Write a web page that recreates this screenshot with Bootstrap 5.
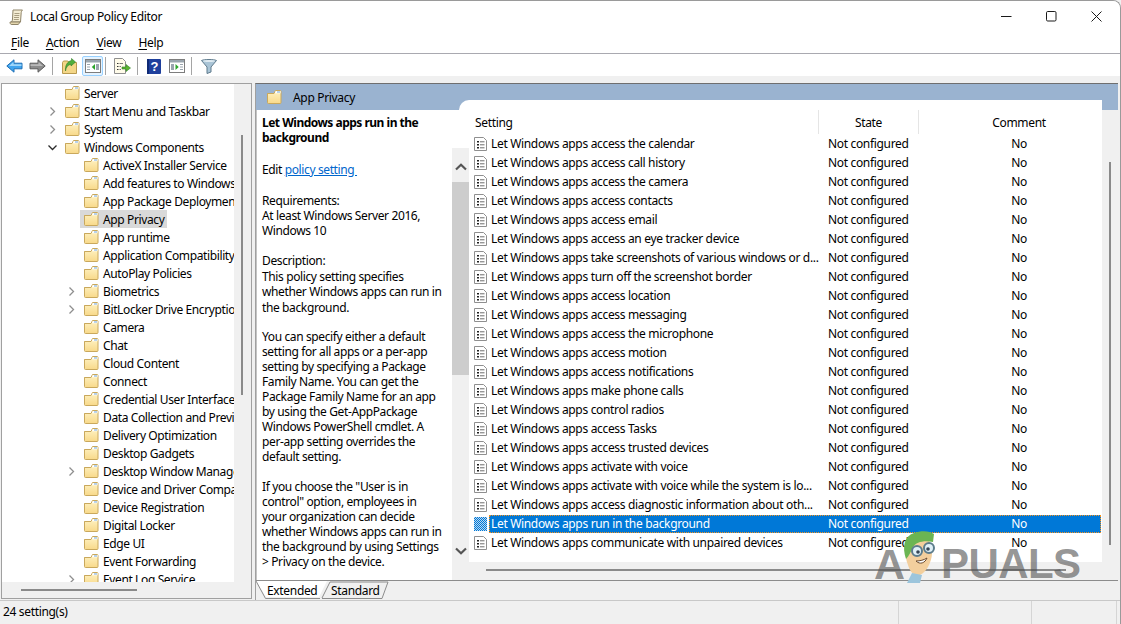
<!DOCTYPE html>
<html lang="en">
<head>
<meta charset="utf-8">
<title>Local Group Policy Editor</title>
<link href="https://cdn.jsdelivr.net/npm/bootstrap@5.3.0/dist/css/bootstrap.min.css" rel="stylesheet">
<style>
html,body{margin:0;height:624px;overflow:hidden;background:#f0f0f0}
.gp-app{width:1121px;height:624px;position:relative;background:#f0f0f0;border-top:1px solid #9a9a9a;border-right:1px solid #9a9a9a;border-top-right-radius:8px;overflow:hidden;font-family:"Noto Sans","Open Sans",sans-serif;font-size:12px;letter-spacing:-.33px;line-height:15px;color:#000}
.gp-title{height:31px;background:#fff;padding-left:9px;gap:6px}
.gp-winbtns{margin-left:auto;gap:34px;padding-right:18px}
.gp-menu{height:22px;background:#fff;border-bottom:1px solid #a9a9b0;padding-left:11px;gap:17px;padding-bottom:1px}
.gp-menu u{text-underline-offset:2px}
.gp-tools{height:22px;background:#fff;padding:2px 0 0 6px}
.gp-sep{width:1px;height:18px;background:#a5a5a5}
.gp-tb{display:flex;align-items:center;justify-content:center}
.gp-tb-on{width:21px;height:20px;background:#e5f3ff;border:1px solid #99d1ff;border-radius:2px}
.gp-ml2{margin-left:2px}.gp-ml5{margin-left:5px}.gp-ml6{margin-left:6px}.gp-ml8{margin-left:8px}.gp-ml9{margin-left:9px}
.gp-main{height:517px;margin-top:7px;padding-left:1px}
.gp-left{width:251px;height:516px;border:1px solid #a0a0a0;background:#f0f0f0}
.gp-tree{width:232px;height:498px;background:#fff;overflow:hidden;white-space:nowrap;letter-spacing:-.38px}
.gp-tree-row{height:18px;display:flex;align-items:center;position:relative}
.gp-l1{padding-left:60px}
.gp-l2{padding-left:79px}
.gp-chev{width:11px;height:11px;margin-left:-15px;margin-right:4px;flex:none}
.gp-folder{width:16px;height:14px;flex:none;margin:0 4px 0 2px}
.gp-tree-sel{background:#d9d9d9;padding-right:3px;height:18px;display:flex;align-items:center;margin-left:-1px;padding-left:1px}
.gp-tree-vs{width:17px;height:498px;position:relative}
.gp-thumb-v{width:2px;background:#8a8a8a}
.gp-tree-thumb{height:260px;margin:51px 0 0 7px}
.gp-tree-hs{height:16px;padding:7px 0 0 19px}
.gp-thumb-h{height:2px;background:#8a8a8a}
.gp-right{margin-left:3px;width:863px;height:517px;border-top:1px solid #6f6f6f;border-left:1px solid #a0a0a0}
.gp-band{height:26px;background:#9ab3d0;padding:6px 0 0 10px;gap:11px}
.gp-band .gp-folder{margin:0}
.gp-body{height:471px;border-bottom:1px solid #8c8c8c}
.gp-desc{width:196px;height:470px;background:#fff;padding:5px 0 0 5px;white-space:nowrap;overflow:hidden;border-left:1px solid #c4c4c4;letter-spacing:-.38px}
.gp-desc p{margin:0 0 15px}
.gp-desc .gp-ptitle{margin-bottom:17px;font-weight:700;letter-spacing:-.5px}
.gp-desc .gp-pedit{margin-bottom:16px}
.gp-desc .gp-pdescr{line-height:15.5px;margin-bottom:14px}
.gp-desc a{color:#0066cc;text-decoration:underline}
.gp-strip{width:17px;height:470px;background:#fff}
.gp-strip-in{height:432px;margin-top:38px;background:#f0f0f0;position:relative}
.gp-strip-btn{height:34px;padding:15px 0 0 3px}
.gp-strip-thumb{height:193px;background:#cdcdcd}
.gp-strip-down{margin-top:172px;padding-left:3px}
.gp-listcol{margin:-10px 0 0 -10px;position:relative}
.gp-listmain{width:643px}
.gp-head{height:34px;background:#fff;border-top-left-radius:10px;padding-top:10px}
.gp-hc{height:24px;display:flex;align-items:center}
.gp-hc1{width:360px;padding-left:16px;border-right:1px solid #e5e5e5}
.gp-hc2{width:100px;justify-content:center;border-right:1px solid #e5e5e5}
.gp-hc3{width:183px;justify-content:center;padding-left:17px}
.gp-rows{margin-left:10px;background:#fff;height:428px}
.gp-r{height:19px;padding-left:5px;white-space:nowrap}
.gp-doc{width:13px;height:14px;flex:none}
.gp-rin{margin-left:2px;height:19px;width:612px;padding-left:2px}
.gp-rn{width:337px;flex:none;overflow:hidden}
.gp-rs{width:170px;flex:none}
.gp-rc{width:42px;text-align:center;flex:none}
.gp-sel .gp-rin{background:#0078d7;color:#fff;outline:1px dotted #f7931e;outline-offset:-1px;height:18px}
.gp-list-hs{height:18px;padding:7px 0 0 27px}
.gp-listvs{width:16px;margin-top:10px;background:#f0f0f0;height:470px;padding:52px 0 0 7px}
.gp-tabs{height:19px;padding-left:11px;position:relative}
.gp-tabsvg{position:absolute;left:0;top:-1px}
.gp-tab1{width:64px;position:relative}
.gp-tab2{width:60px;position:relative}
.gp-status{height:24px;border-top:1px solid #c8c8c8;position:relative}
.gp-st1{width:899px;padding-left:3px;height:23px;line-height:22px;border-right:1px solid #d5d5d5}
.gp-st2{width:133px;height:23px;border-right:1px solid #d5d5d5}
.gp-st3{width:85px;height:23px;border-right:1px solid #d5d5d5}
.gp-wm{position:absolute;left:874px;top:528px;width:210px;height:56px;pointer-events:none}
.gp-wm-a,.gp-wm-b{position:absolute;top:10px;font-family:"Liberation Sans",sans-serif;font-weight:700;font-size:43px;line-height:50px;color:rgba(80,80,80,.62);letter-spacing:-.6px}
.gp-wm-a{left:0}
.gp-wm-b{left:67px;font-size:42px}
.gp-wm-m{position:absolute;left:26px;top:0}
</style>
</head>
<body>
<svg width="0" height="0" class="position-absolute">
<defs>
<linearGradient id="fg" x1="0" y1="0" x2="0" y2="1"><stop offset="0" stop-color="#fff3c4"/><stop offset="1" stop-color="#f8d98a"/></linearGradient>
<symbol id="fld" viewBox="0 0 16 14"><path d="M1.500 3.500V12.500a1 1 0 0 0 1 1H14a1 1 0 0 0 1-1V1.500a1 1 0 0 0-1-1H9.500L8 3.500Z" fill="url(#fg)" stroke="#c9a85c"/><path d="M9.800 1h4.700v2.200H8.800Z" fill="#fff" stroke="none"/><path d="M11 1.200h3v1.500h-3Z" fill="#9ec3e6"/><path d="M1.500 3.500H8" fill="none" stroke="#c9a85c"/></symbol>
<symbol id="doc" viewBox="0 0 13 14"><path d="M.5.500H9.500L12.500 3.500V13.500H.5Z" fill="#fff" stroke="#8f8f8f"/><path d="M3 4h2v1.600H3ZM3 7h2v1.600H3ZM3 10h2v1.600H3Z" fill="#1e1e1e"/><path d="M6 4.800h4.500M6 7.800h4.500M6 10.800h4.500" stroke="#6b6b6b"/></symbol>
<pattern id="dith" width="2" height="2" patternUnits="userSpaceOnUse"><rect width="2" height="2" fill="#0078d7"/><rect width="1" height="1" fill="#bcd9f0"/><rect x="1" y="1" width="1" height="1" fill="#bcd9f0"/></pattern>
<symbol id="chr" viewBox="0 0 11 11"><path d="M3.500 1.500 7.500 5.500 3.500 9.500" fill="none" stroke="#8f8f8f" stroke-width="1.300"/></symbol>
<symbol id="chd" viewBox="0 0 11 11"><path d="M1.500 3.500 5.500 7.500 9.500 3.500" fill="none" stroke="#2b2b2b" stroke-width="1.300"/></symbol>
</defs>
</svg>
<div class="gp-app d-flex flex-column">
  <div class="gp-title d-flex align-items-center">
    <svg width="15" height="16" viewBox="0 0 15 16"><path d="M4 1h9.500c-1 1-1.400 2-1.400 4L11.500 13H2c1-.5 1.400-1.200 1.500-3Z" fill="#f4ecd2" stroke="#8f8468"/><path d="M1 13h10c-.6 1.500-1.300 2.200-2 2.500H2.200C1.400 15.200 1 14.300 1 13Z" fill="#e4d6ad" stroke="#8f8468"/><path d="M5.500 4.500h5M5.300 6.500h5M5 8.500h5M4.800 10.500h5" stroke="#a89d80"/></svg>
    <span>Local Group Policy Editor</span>
    <div class="gp-winbtns d-flex align-items-center">
      <svg width="11" height="11" viewBox="0 0 11 11"><path d="M0 5.500h10.500" stroke="#1a1a1a"/></svg>
      <svg width="11" height="11" viewBox="0 0 11 11"><rect x=".5" y=".5" width="9.500" height="9.500" rx="1.200" fill="none" stroke="#1a1a1a"/></svg>
      <svg width="11" height="11" viewBox="0 0 11 11"><path d="M.5.500l10 10M10.500.500l-10 10" stroke="#1a1a1a"/></svg>
    </div>
  </div>
  <div class="gp-menu d-flex align-items-center">
    <span><u>F</u>ile</span><span><u>A</u>ction</span><span><u>V</u>iew</span><span><u>H</u>elp</span>
  </div>
  <div class="gp-tools d-flex align-items-center">
    <svg width="17" height="14" viewBox="0 0 17 14"><path d="M.8 7 8 .8V4.200h8V9.800H8V13.200Z" fill="#3fa4ee" stroke="#1f6fb5"/><path d="M3 7 7.500 3v2.200h8V7Z" fill="#9fd6fa"/></svg>
    <svg class="gp-ml6" width="17" height="14" viewBox="0 0 17 14"><path d="M16.200 7 9 .8V4.200H1V9.800H9V13.200Z" fill="#8c8c8c" stroke="#5c5c5c"/><path d="M14 7 9.500 3v2.200h-8V7Z" fill="#b9b9b9"/></svg>
    <span class="gp-sep gp-ml6"></span>
    <svg class="gp-ml9" width="15" height="16" viewBox="0 0 15 16"><path d="M.5 4.500V15.500H14.500V4.500H7L5.800 3H1.500Z" fill="#f3d687" stroke="#b99a4f"/><path d="M3.500 13C4 9 6 6.800 9 6.200V8L13.500 4 9.500.5V2.500C5 3.500 3 8 3.500 13Z" fill="#4fae3c" stroke="#2f7d27" stroke-width=".6"/></svg>
    <span class="gp-tb gp-tb-on gp-ml5">
      <svg width="16" height="14" viewBox="0 0 16 14"><rect x=".5" y=".5" width="15" height="13" fill="#fff" stroke="#7d7d7d"/><rect x="1" y="1" width="14" height="2.500" fill="#9aa5ae"/><path d="M2 5h3v1H2ZM2 7.500h3v1H2ZM2 10h3v1H2ZM11 5h3v6h-3Z" fill="#9aa5ae"/><path d="M10 5v6L6.800 8Z" fill="#2ca52c"/></svg>
    </span>
    <span class="gp-sep gp-ml2"></span>
    <svg class="gp-ml8" width="17" height="16" viewBox="0 0 17 16"><path d="M.5.500H8.500L11.500 3.500V15.500H.5Z" fill="#fffbe9" stroke="#8f8f8f"/><path d="M3 5h1.500v1H3ZM3 8h1.500v1H3ZM3 11h1.500v1H3Z" fill="#333"/><path d="M5.500 5.500H9M5.500 8.500H7M5.500 11.500H7" stroke="#777"/><path d="M8 9h4V6.500L16.500 10 12 13.500V11H8Z" fill="#5cb531" stroke="#2f7d27" stroke-width=".6"/></svg>
    <span class="gp-sep gp-ml6"></span>
    <svg class="gp-ml9" width="14" height="15" viewBox="0 0 14 15"><rect width="14" height="15" rx="1" fill="#1e3f9c"/><rect x="0" y="0" width="2" height="15" fill="#0f2a75"/><text x="7.500" y="12" text-anchor="middle" font-family="Liberation Sans,sans-serif" font-weight="700" font-size="13" fill="#fff" letter-spacing="0">?</text></svg>
    <svg class="gp-ml8" width="16" height="14" viewBox="0 0 16 14"><rect x=".5" y=".5" width="15" height="13" fill="#fff" stroke="#7d7d7d"/><rect x="1" y="1" width="14" height="2.500" fill="#9aa5ae"/><path d="M2 5h3v6H2ZM11 5h3v1h-3ZM11 7.500h3v1h-3ZM11 10h3v1h-3Z" fill="#9aa5ae"/><path d="M6.500 5v6L9.700 8Z" fill="#2ca52c"/></svg>
    <span class="gp-sep gp-ml6"></span>
    <svg class="gp-ml9" width="16" height="15" viewBox="0 0 16 15"><path d="M.5 1.500C3 .2 13 .2 15.500 1.500L10 8V13L6 14.500V8Z" fill="#a9c4d6" stroke="#5f7a8c"/><ellipse cx="8" cy="2" rx="6" ry="1" fill="#dfeaf1"/></svg>
  </div>
  <div class="gp-main d-flex">
    <div class="gp-left d-flex flex-column">
      <div class="d-flex">
        <div class="gp-tree">
          <div class="gp-tree-row gp-l1"><svg class="gp-folder"><use href="#fld"/></svg>Server</div>
          <div class="gp-tree-row gp-l1"><svg class="gp-chev"><use href="#chr"/></svg><svg class="gp-folder"><use href="#fld"/></svg>Start Menu and Taskbar</div>
          <div class="gp-tree-row gp-l1"><svg class="gp-chev"><use href="#chr"/></svg><svg class="gp-folder"><use href="#fld"/></svg>System</div>
          <div class="gp-tree-row gp-l1"><svg class="gp-chev"><use href="#chd"/></svg><svg class="gp-folder"><use href="#fld"/></svg>Windows Components</div>
          <div class="gp-tree-row gp-l2"><svg class="gp-folder"><use href="#fld"/></svg>ActiveX Installer Service</div>
          <div class="gp-tree-row gp-l2"><svg class="gp-folder"><use href="#fld"/></svg>Add features to Windows 10</div>
          <div class="gp-tree-row gp-l2"><svg class="gp-folder"><use href="#fld"/></svg>App Package Deployment</div>
          <div class="gp-tree-row gp-l2"><span class="gp-tree-sel"><svg class="gp-folder"><use href="#fld"/></svg>App Privacy</span></div>
          <div class="gp-tree-row gp-l2"><svg class="gp-folder"><use href="#fld"/></svg>App runtime</div>
          <div class="gp-tree-row gp-l2"><svg class="gp-folder"><use href="#fld"/></svg>Application Compatibility</div>
          <div class="gp-tree-row gp-l2"><svg class="gp-folder"><use href="#fld"/></svg>AutoPlay Policies</div>
          <div class="gp-tree-row gp-l2"><svg class="gp-chev"><use href="#chr"/></svg><svg class="gp-folder"><use href="#fld"/></svg>Biometrics</div>
          <div class="gp-tree-row gp-l2"><svg class="gp-chev"><use href="#chr"/></svg><svg class="gp-folder"><use href="#fld"/></svg>BitLocker Drive Encryption</div>
          <div class="gp-tree-row gp-l2"><svg class="gp-folder"><use href="#fld"/></svg>Camera</div>
          <div class="gp-tree-row gp-l2"><svg class="gp-folder"><use href="#fld"/></svg>Chat</div>
          <div class="gp-tree-row gp-l2"><svg class="gp-folder"><use href="#fld"/></svg>Cloud Content</div>
          <div class="gp-tree-row gp-l2"><svg class="gp-folder"><use href="#fld"/></svg>Connect</div>
          <div class="gp-tree-row gp-l2"><svg class="gp-folder"><use href="#fld"/></svg>Credential User Interface</div>
          <div class="gp-tree-row gp-l2"><svg class="gp-folder"><use href="#fld"/></svg>Data Collection and Preview Builds</div>
          <div class="gp-tree-row gp-l2"><svg class="gp-folder"><use href="#fld"/></svg>Delivery Optimization</div>
          <div class="gp-tree-row gp-l2"><svg class="gp-folder"><use href="#fld"/></svg>Desktop Gadgets</div>
          <div class="gp-tree-row gp-l2"><svg class="gp-chev"><use href="#chr"/></svg><svg class="gp-folder"><use href="#fld"/></svg>Desktop Window Manager</div>
          <div class="gp-tree-row gp-l2"><svg class="gp-folder"><use href="#fld"/></svg>Device and Driver Compatibility</div>
          <div class="gp-tree-row gp-l2"><svg class="gp-folder"><use href="#fld"/></svg>Device Registration</div>
          <div class="gp-tree-row gp-l2"><svg class="gp-folder"><use href="#fld"/></svg>Digital Locker</div>
          <div class="gp-tree-row gp-l2"><svg class="gp-folder"><use href="#fld"/></svg>Edge UI</div>
          <div class="gp-tree-row gp-l2"><svg class="gp-folder"><use href="#fld"/></svg>Event Forwarding</div>
          <div class="gp-tree-row gp-l2"><svg class="gp-chev"><use href="#chr"/></svg><svg class="gp-folder"><use href="#fld"/></svg>Event Log Service</div>
        </div>
        <div class="gp-tree-vs"><div class="gp-thumb-v gp-tree-thumb"></div></div>
      </div>
      <div class="gp-tree-hs"><div class="gp-thumb-h" style="width:116px"></div></div>
    </div>
    <div class="gp-right d-flex flex-column">
      <div class="gp-band d-flex align-items-start"><svg class="gp-folder"><use href="#fld"/></svg><span>App Privacy</span></div>
      <div class="gp-body d-flex">
        <div class="gp-desc">
          <p class="gp-ptitle">Let Windows apps run in the<br>background</p>
          <p class="gp-pedit">Edit <a href="#">policy setting&nbsp;</a></p>
          <p>Requirements:<br>At least Windows Server 2016,<br>Windows 10</p>
          <p class="gp-pdescr">Description:<br>This policy setting specifies<br>whether Windows apps can run in<br>the background.</p>
          <p>You can specify either a default<br>setting for all apps or a per-app<br>setting by specifying a Package<br>Family Name. You can get the<br>Package Family Name for an app<br>by using the Get-AppPackage<br>Windows PowerShell cmdlet. A<br>per-app setting overrides the<br>default setting.</p>
          <p>If you choose the "User is in<br>control" option, employees in<br>your organization can decide<br>whether Windows apps can run in<br>the background by using Settings<br>&gt; Privacy on the device.</p>
        </div>
        <div class="gp-strip">
          <div class="gp-strip-in">
            <div class="gp-strip-btn"><svg class="d-block" width="12" height="8" viewBox="0 0 12 8"><path d="M1 6.500 6 1.800 11 6.500" fill="none" stroke="#555" stroke-width="2.200"/></svg></div>
            <div class="gp-strip-thumb"></div>
            <div class="gp-strip-down"><svg class="d-block" width="12" height="8" viewBox="0 0 12 8"><path d="M1 1.500 6 6.200 11 1.500" fill="none" stroke="#555" stroke-width="2.200"/></svg></div>
          </div>
        </div>
        <div class="gp-listcol d-flex">
          <div class="gp-listmain">
            <div class="gp-head d-flex">
              <div class="gp-hc gp-hc1">Setting</div>
              <div class="gp-hc gp-hc2">State</div>
              <div class="gp-hc gp-hc3">Comment</div>
            </div>
            <div class="gp-rows">
              <div class="gp-r d-flex align-items-center"><svg class="gp-doc"><use href="#doc"/></svg><div class="gp-rin d-flex align-items-center"><span class="gp-rn">Let Windows apps access the calendar</span><span class="gp-rs">Not configured</span><span class="gp-rc">No</span></div></div>
              <div class="gp-r d-flex align-items-center"><svg class="gp-doc"><use href="#doc"/></svg><div class="gp-rin d-flex align-items-center"><span class="gp-rn">Let Windows apps access call history</span><span class="gp-rs">Not configured</span><span class="gp-rc">No</span></div></div>
              <div class="gp-r d-flex align-items-center"><svg class="gp-doc"><use href="#doc"/></svg><div class="gp-rin d-flex align-items-center"><span class="gp-rn">Let Windows apps access the camera</span><span class="gp-rs">Not configured</span><span class="gp-rc">No</span></div></div>
              <div class="gp-r d-flex align-items-center"><svg class="gp-doc"><use href="#doc"/></svg><div class="gp-rin d-flex align-items-center"><span class="gp-rn">Let Windows apps access contacts</span><span class="gp-rs">Not configured</span><span class="gp-rc">No</span></div></div>
              <div class="gp-r d-flex align-items-center"><svg class="gp-doc"><use href="#doc"/></svg><div class="gp-rin d-flex align-items-center"><span class="gp-rn">Let Windows apps access email</span><span class="gp-rs">Not configured</span><span class="gp-rc">No</span></div></div>
              <div class="gp-r d-flex align-items-center"><svg class="gp-doc"><use href="#doc"/></svg><div class="gp-rin d-flex align-items-center"><span class="gp-rn">Let Windows apps access an eye tracker device</span><span class="gp-rs">Not configured</span><span class="gp-rc">No</span></div></div>
              <div class="gp-r d-flex align-items-center"><svg class="gp-doc"><use href="#doc"/></svg><div class="gp-rin d-flex align-items-center"><span class="gp-rn">Let Windows apps take screenshots of various windows or d...</span><span class="gp-rs">Not configured</span><span class="gp-rc">No</span></div></div>
              <div class="gp-r d-flex align-items-center"><svg class="gp-doc"><use href="#doc"/></svg><div class="gp-rin d-flex align-items-center"><span class="gp-rn">Let Windows apps turn off the screenshot border</span><span class="gp-rs">Not configured</span><span class="gp-rc">No</span></div></div>
              <div class="gp-r d-flex align-items-center"><svg class="gp-doc"><use href="#doc"/></svg><div class="gp-rin d-flex align-items-center"><span class="gp-rn">Let Windows apps access location</span><span class="gp-rs">Not configured</span><span class="gp-rc">No</span></div></div>
              <div class="gp-r d-flex align-items-center"><svg class="gp-doc"><use href="#doc"/></svg><div class="gp-rin d-flex align-items-center"><span class="gp-rn">Let Windows apps access messaging</span><span class="gp-rs">Not configured</span><span class="gp-rc">No</span></div></div>
              <div class="gp-r d-flex align-items-center"><svg class="gp-doc"><use href="#doc"/></svg><div class="gp-rin d-flex align-items-center"><span class="gp-rn">Let Windows apps access the microphone</span><span class="gp-rs">Not configured</span><span class="gp-rc">No</span></div></div>
              <div class="gp-r d-flex align-items-center"><svg class="gp-doc"><use href="#doc"/></svg><div class="gp-rin d-flex align-items-center"><span class="gp-rn">Let Windows apps access motion</span><span class="gp-rs">Not configured</span><span class="gp-rc">No</span></div></div>
              <div class="gp-r d-flex align-items-center"><svg class="gp-doc"><use href="#doc"/></svg><div class="gp-rin d-flex align-items-center"><span class="gp-rn">Let Windows apps access notifications</span><span class="gp-rs">Not configured</span><span class="gp-rc">No</span></div></div>
              <div class="gp-r d-flex align-items-center"><svg class="gp-doc"><use href="#doc"/></svg><div class="gp-rin d-flex align-items-center"><span class="gp-rn">Let Windows apps make phone calls</span><span class="gp-rs">Not configured</span><span class="gp-rc">No</span></div></div>
              <div class="gp-r d-flex align-items-center"><svg class="gp-doc"><use href="#doc"/></svg><div class="gp-rin d-flex align-items-center"><span class="gp-rn">Let Windows apps control radios</span><span class="gp-rs">Not configured</span><span class="gp-rc">No</span></div></div>
              <div class="gp-r d-flex align-items-center"><svg class="gp-doc"><use href="#doc"/></svg><div class="gp-rin d-flex align-items-center"><span class="gp-rn">Let Windows apps access Tasks</span><span class="gp-rs">Not configured</span><span class="gp-rc">No</span></div></div>
              <div class="gp-r d-flex align-items-center"><svg class="gp-doc"><use href="#doc"/></svg><div class="gp-rin d-flex align-items-center"><span class="gp-rn">Let Windows apps access trusted devices</span><span class="gp-rs">Not configured</span><span class="gp-rc">No</span></div></div>
              <div class="gp-r d-flex align-items-center"><svg class="gp-doc"><use href="#doc"/></svg><div class="gp-rin d-flex align-items-center"><span class="gp-rn">Let Windows apps activate with voice</span><span class="gp-rs">Not configured</span><span class="gp-rc">No</span></div></div>
              <div class="gp-r d-flex align-items-center"><svg class="gp-doc"><use href="#doc"/></svg><div class="gp-rin d-flex align-items-center"><span class="gp-rn">Let Windows apps activate with voice while the system is lo...</span><span class="gp-rs">Not configured</span><span class="gp-rc">No</span></div></div>
              <div class="gp-r d-flex align-items-center"><svg class="gp-doc"><use href="#doc"/></svg><div class="gp-rin d-flex align-items-center"><span class="gp-rn">Let Windows apps access diagnostic information about oth...</span><span class="gp-rs">Not configured</span><span class="gp-rc">No</span></div></div>
              <div class="gp-r gp-sel d-flex align-items-center"><svg class="gp-doc" viewBox="0 0 13 14"><rect width="13" height="14" fill="url(#dith)"/></svg><div class="gp-rin d-flex align-items-center"><span class="gp-rn">Let Windows apps run in the background</span><span class="gp-rs">Not configured</span><span class="gp-rc">No</span></div></div>
              <div class="gp-r d-flex align-items-center"><svg class="gp-doc"><use href="#doc"/></svg><div class="gp-rin d-flex align-items-center"><span class="gp-rn">Let Windows apps communicate with unpaired devices</span><span class="gp-rs">Not configured</span><span class="gp-rc">No</span></div></div>
            </div>
            <div class="gp-list-hs"><div class="gp-thumb-h" style="width:580px"></div></div>
          </div>
          <div class="gp-listvs"><div class="gp-thumb-v" style="height:383px"></div></div>
        </div>
      </div>
      <div class="gp-tabs d-flex align-items-center">
        <svg class="gp-tabsvg" width="140" height="20" viewBox="0 0 140 20"><path d="M0 1 10 17H63L71 1Z" fill="#fff"/><path d="M0 1 9.500 18.500H64M66 18 74 2H132L126 18.500H66" fill="none" stroke="#8c8c8c"/></svg>
        <span class="gp-tab1">Extended</span><span class="gp-tab2">Standard</span>
      </div>
    </div>
  </div>
  <div class="gp-status d-flex">
    <div class="gp-st1">24 setting(s)</div>
    <div class="gp-st2"></div>
    <div class="gp-st3"></div>
  </div>
  <div class="gp-wm">
    <span class="gp-wm-a">A</span>
    <svg class="gp-wm-m" width="38" height="54" viewBox="0 0 38 54"><path d="M8 36C4 26 5 14 9 10L28 8 32 20C33 30 28 42 20 46 14 47 10 43 8 36Z" fill="#f3cf9d"/><path d="M6 30C2 18 4 7 14 4 22 1 30 2 34 5L33 13C24 11 16 13 13 18 11 22 9 27 6 30Z" fill="#6bb552"/><circle cx="17" cy="22" r="5" fill="#dff0f7" stroke="#5c7c8c" stroke-width="2"/><circle cx="29" cy="19" r="5" fill="#dff0f7" stroke="#5c7c8c" stroke-width="2"/><circle cx="18" cy="23" r="1.800" fill="#345"/><circle cx="28" cy="20" r="1.800" fill="#345"/><path d="M16 32C20 36 25 34 27 29 24 31 20 32 16 32Z" fill="#fff" stroke="#6b4a2d"/><path d="M7 54 12 44 22 46 20 54Z" fill="#9cc5dc"/></svg>
    <span class="gp-wm-b">PUALS</span>
  </div>
</div>
<script src="https://cdn.jsdelivr.net/npm/bootstrap@5.3.0/dist/js/bootstrap.bundle.min.js"></script>
</body>
</html>
